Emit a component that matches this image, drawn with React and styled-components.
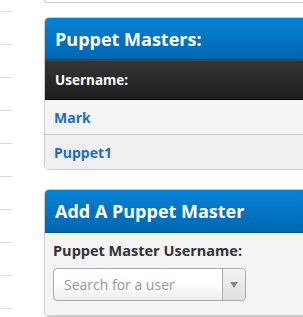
import styled, { createGlobalStyle } from 'styled-components';

const GlobalStyle = createGlobalStyle`
  html, body {
    margin: 0;
    padding: 0;
    background: #fff;
    overflow: hidden;
    font-family: "Open Sans", "DejaVu Sans", sans-serif;
  }
`;

const Page = styled.div`
  display: flex;
  width: 303px;
  height: 317px;
  overflow: hidden;
`;

const SideList = styled.ul`
  list-style: none;
  margin: -21px 0 0;
  padding: 0;
  width: 12px;
  flex-shrink: 0;
`;

const SideItem = styled.li`
  height: 32px;
  border-bottom: 1px solid #ddd;
`;

const Main = styled.div`
  margin-left: 32px;
  width: 290px;
  flex-shrink: 0;
  display: flex;
  flex-direction: column;
`;

const Panel = styled.section`
  border: 1px solid #ccc;
  border-radius: 5px;
  background: ${(p) => p.$bg || '#fff'};
  overflow: hidden;
  margin-top: ${(p) => p.$gap || 0}px;
`;

const PanelStub = styled.div`
  height: 2px;
  border: 1px solid #ccc;
  border-top: none;
  border-radius: 0 0 5px 5px;
`;

const BlueHeader = styled.h2`
  margin: 0;
  height: ${(p) => p.$h}px;
  padding-left: 10px;
  display: flex;
  align-items: center;
  background: linear-gradient(#0882d6, #0066ae);
  border-bottom: 1px solid #00569a;
  color: #fff;
  font-size: 18px;
  font-weight: 700;
`;

const DarkHeader = styled.div`
  height: 38px;
  padding-left: 10px;
  display: flex;
  align-items: center;
  background: linear-gradient(#353535, #1d1d1d);
  border-top: 1px solid #454545;
  border-bottom: 1px solid #000;
  color: #fff;
  font-size: 13.5px;
  font-weight: 700;
`;

const Row = styled.div`
  height: 34px;
  padding-left: 9px;
  display: flex;
  align-items: center;
  background: ${(p) => (p.$alt ? '#f0f0f0' : '#f4f4f4')};
  border-top: ${(p) => (p.$first ? 'none' : '1px solid #ccc')};
`;

const UserLink = styled.a`
  color: #1f6db8;
  font-size: 14px;
  font-weight: 700;
  text-decoration: none;
`;

const FormBody = styled.div`
  padding: 9px 9px 14px 8px;
  border-bottom: 1px solid #ccc;
`;

const Label = styled.label`
  display: block;
  color: #333;
  font-size: 14.5px;
  font-weight: 700;
  line-height: 18px;
  margin-bottom: 8px;
`;

const Select = styled.div`
  width: 191px;
  height: 31px;
  display: flex;
  border: 1px solid #aaa;
  border-radius: 4px;
  background: linear-gradient(#fff 40%, #eee);
`;

const Placeholder = styled.span`
  flex: 1;
  display: flex;
  align-items: center;
  padding-left: 10px;
  color: #999;
  font-size: 14px;
`;

const ArrowBox = styled.span`
  width: 22px;
  border-left: 1px solid #aaa;
  display: flex;
  align-items: center;
  justify-content: center;
  background: linear-gradient(#f4f4f4, #e0e0e0);
  border-radius: 0 4px 4px 0;
`;

const Arrow = styled.span`
  width: 0;
  height: 0;
  border-left: 4px solid transparent;
  border-right: 4px solid transparent;
  border-top: 6px solid #888;
`;

export default function App() {
  return (
    <Page>
      <GlobalStyle />
      <SideList>
        {Array.from({ length: 11 }).map((_, i) => (
          <SideItem key={i} />
        ))}
      </SideList>
      <Main>
        <PanelStub />
        <Panel $gap={14}>
          <BlueHeader $h={41}>Puppet Masters:</BlueHeader>
          <DarkHeader>Username:</DarkHeader>
          <Row $first>
            <UserLink href="#">Mark</UserLink>
          </Row>
          <Row $alt>
            <UserLink href="#">Puppet1</UserLink>
          </Row>
        </Panel>
        <Panel $gap={19} $bg="#f4f4f4">
          <BlueHeader $h={42}>Add A Puppet Master</BlueHeader>
          <FormBody>
            <Label>Puppet Master Username:</Label>
            <Select>
              <Placeholder>Search for a user</Placeholder>
              <ArrowBox>
                <Arrow />
              </ArrowBox>
            </Select>
          </FormBody>
        </Panel>
      </Main>
    </Page>
  );
}
